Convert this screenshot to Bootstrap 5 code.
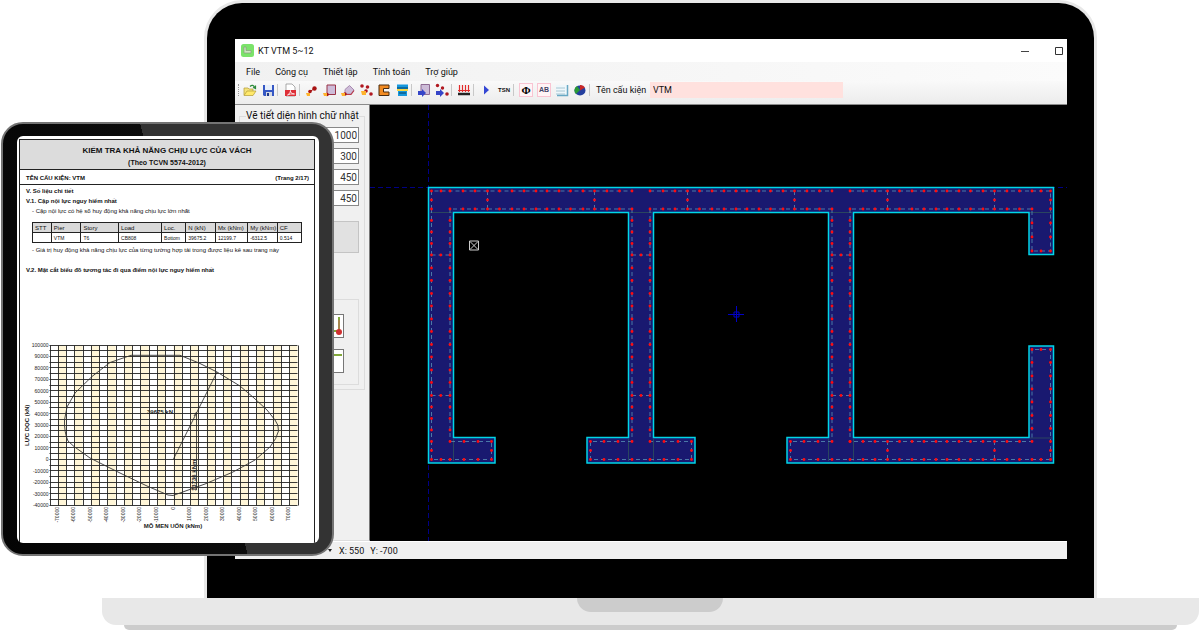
<!DOCTYPE html>
<html lang="vi">
<head>
<meta charset="utf-8">
<meta name="viewport" content="width=device-width, initial-scale=1">
<title>KT VTM</title>
<link href="https://cdn.jsdelivr.net/npm/bootstrap@5.3.0/dist/css/bootstrap.min.css" rel="stylesheet">
<style>
body{background:#fff;color:#222}
.stage{overflow:hidden}
.laptop{margin:0 103px 0 204px;border:3px solid #e8e8e8;border-bottom:0;border-radius:38px 38px 0 0;background:#000;padding:36px 27px 39px 28px}
.laptop-base{margin:0 1px 0 102px;height:27px;background:#e8e8e8;border-radius:0 0 14px 14px}
.notch{width:146px;height:14px;background:#ccc;border-radius:0 0 14px 14px;margin-left:475px}
.laptop-foot{margin:0 23px 0 124px;height:5px;background:#ccc;border-radius:0 0 5px 5px}
.app{background:#f0f0f0;font:9px/14px Roboto,"Noto Sans",sans-serif;color:#111}
.titlebar{height:23px;background:#fff;padding:0 3px 0 6px}
.menubar{height:19px;background:linear-gradient(90deg,#f1f1f1,#fbfbfb);padding-left:11px;gap:15px}
.menubar a{color:#111;text-decoration:none}
.winbtn{width:10px;height:10px;padding:0;border:0;background:none;line-height:0}
.toolbar{height:24px;background:linear-gradient(#f9f9f9,#ececec);padding:0 0 5px 3px;border-bottom:1px solid #8a8a8a}
.grip{width:3px;height:12px;border-left:1px dotted #999}
.tool{width:18px;height:16px;padding:0;border:0;background:none;line-height:0;flex:none;text-align:center}
.tool svg{width:14px;height:14px}
.split{width:4px;height:12px;border-left:1px solid #c8c8c8;flex:none}
.tool-txt{font:bold 6px/14px "Liberation Sans",sans-serif;color:#111}
.tool-box{font:bold 11px/12px "Liberation Serif",serif}
.tool-box span{display:block;width:14px;height:14px;margin:auto;border:1px solid #f9c4d2;background:#fff4f6}
.tool-ab{font:bold 7px/12px "Liberation Sans",sans-serif;color:#446}
.member-label{margin-left:3px;width:52px;white-space:nowrap}
.member{width:193px;height:16px;border:0;padding:0 3px;margin-left:2px;background:#ffe1de;color:#111}
.side{width:135px;flex:none;padding:4px 4px 0 4px;border-right:1px solid #777;border-bottom:1px solid #ddd;font-size:10px}
.group{border:1px solid #dcdcdc;padding:0 5px;height:281px}
.group legend{float:none;width:auto;font-size:10px;line-height:14px;margin:0 0 4px 1px;padding:0;background:#f0f0f0;white-space:nowrap}
.num{display:block;width:100%;height:16px;border:1px solid #888;background:#fff;text-align:right;padding:0 1px;margin-bottom:5px;color:#333}
.wide{display:block;width:100%;height:32px;border:1px solid #c4c4c4;background:#e1e1e1;margin-top:15px}
.sub{border:1px solid #dcdcdc;margin-top:46px;height:86px;padding:14px}
.pick{display:block;width:24px;height:24px;margin:0 0 11px auto;padding:0;border:1px solid #777;background:#fff;line-height:0}
.canvas{flex:1;background:#000;line-height:0;min-width:0}
.canvas svg{width:100%;height:auto;display:block}
.statusbar{height:18px;padding-left:93px;gap:6px;border-top:1px solid #fff}
.tablet{position:absolute;left:1px;top:122px;width:333px;border:2px solid #747474;border-radius:22px;background:linear-gradient(76deg,#040404 0,#0c0c0c 56%,#333 56%);background-origin:border-box;padding:12px 13px 11px 14px}
.page-view{background:#fff;border-radius:6px;padding:3px 4px 0 2px;overflow:hidden}
.sheet{border:1px solid #222;border-bottom:0;font:6px/10px "Liberation Sans",sans-serif;color:#111}
.sheet-head{background:#dcdcdc;border-bottom:1px solid #222;height:30px;padding-top:4px;text-align:center;font-weight:bold;font-size:7px}
.sheet-title{font-size:8px;line-height:14px}
.sheet-row{border-bottom:1px solid #222;height:15px;padding:3px 5px 0 6px;font-weight:bold}
.sheet-body{padding:1px 6px 0 6px}
.sheet-body p,.sheet-body h2{margin:0;font-size:6px;line-height:10px;white-space:nowrap}
.sheet-body h2{font-weight:bold}
.sheet-body h2.next-part{margin-top:10px}
.sheet-body p{padding-left:6px}
.loads{width:270px;table-layout:fixed;margin:6px 0 2px 6px;border-collapse:collapse;line-height:8px;white-space:nowrap}
.loads th,.loads td{border:1px solid #222;padding:0 2px;height:10px;overflow:hidden}
.loads th{background:#d9d9d9;font-weight:normal;font-size:6px}
.loads td{font-size:5px}
.chart{display:block;width:100%;height:auto;margin-top:64px}
</style>
</head>
<body>
<main class="stage position-relative">
  <section class="laptop">
    <div class="app">
      <header class="titlebar d-flex align-items-center">
        <svg width="13" height="13" viewBox="0 0 13 13"><rect width="13" height="13" rx="2.500" fill="#7be36a"/><path d="M3 3v6h7V6.500H5V3z" fill="#cbe8c0" stroke="#8a9a80" stroke-width=".7"/></svg>
        <span class="ms-1">KT VTM 5~12</span>
        <button class="winbtn ms-auto me-4" aria-label="Minimize"><svg width="10" height="10"><path d="M1 5.500h8" stroke="#444"/></svg></button>
        <button class="winbtn" aria-label="Maximize"><svg width="10" height="10"><path d="M1.500 1.500h7v7h-7z" fill="none" stroke="#333"/></svg></button>
      </header>
      <nav class="menubar d-flex align-items-center">
        <a href="#">File</a><a href="#">Công cụ</a><a href="#">Thiết lập</a><a href="#">Tính toán</a><a href="#">Trợ giúp</a>
      </nav>
      <div class="toolbar d-flex align-items-center">
        <i class="grip"></i>
        <button class="tool" aria-label="Open"><svg viewBox="0 0 14 14"><path d="M1 12V5h4l1 1h4v2" fill="#f5e27a" stroke="#b39b33" stroke-width=".7"/><path d="M1 12.500L4 8h9l-3 4.500z" fill="#ffe96b" stroke="#b39b33" stroke-width=".7"/><path d="M7 3.500q3-3 5 1.500M10 4.500l2.500 1V2.500" fill="none" stroke="#2d8a3a" stroke-width="1.200"/></svg></button>
        <button class="tool" aria-label="Save"><svg viewBox="0 0 14 14"><path d="M2 2h11v11H3l-1-1z" fill="#3557c4"/><path d="M4 2h7v5H4z" fill="#e7effb"/><path d="M5 9h6v4H5z" fill="#d5d9e2"/><path d="M6 10h2v3H6z" fill="#223a88"/></svg></button>
        <i class="split"></i>
        <button class="tool" aria-label="PDF"><svg viewBox="0 0 14 14"><path d="M3 1h6l3 3v9H3z" fill="#fff" stroke="#888" stroke-width=".7"/><path d="M2 7h11v6H2z" fill="#de3038"/><path d="M4.500 12q3.500-2 3-4.500-.5 3 4 3.500-4-.5-7 1" fill="none" stroke="#fff" stroke-width=".8"/></svg></button>
        <i class="split"></i>
        <button class="tool" aria-label="Point"><svg viewBox="0 0 14 14"><circle cx="9.500" cy="5.500" r="2.200" fill="#a81414"/><circle cx="5" cy="8.500" r="1.800" fill="#a81414"/><path d="M5 8.500l4.500-3" stroke="#a81414"/><path d="M1 10h4v3H2z" fill="#ffb32c"/></svg></button>
        <button class="tool" aria-label="Rectangle"><svg viewBox="0 0 14 14"><path d="M4 2h8.500v9.500H4z" fill="#cdbcd8" stroke="#9a3247"/><circle cx="4" cy="11.500" r="1.800" fill="#a81414"/><path d="M0 10h4v3H1z" fill="#ffb32c"/></svg></button>
        <button class="tool" aria-label="Polygon"><svg viewBox="0 0 14 14"><path d="M4 10V6.500L8.500 2.500 13 7l-3 4H5z" fill="#cdbcd8" stroke="#a88ab0"/><path d="M4 11.500h6L13 7.500" fill="none" stroke="#b8394a" stroke-width="1.200"/><circle cx="4" cy="11" r="1.700" fill="#a81414"/><path d="M0 10h4v3H1z" fill="#ffb32c"/></svg></button>
        <button class="tool" aria-label="Points"><svg viewBox="0 0 14 14" fill="#b01820"><circle cx="3" cy="3" r="1.800"/><circle cx="8.500" cy="4" r="1.800"/><circle cx="7" cy="8" r="1.800"/><circle cx="12" cy="11" r="1.800"/><path d="M2 8h5v4H3z" fill="#ffb32c"/></svg></button>
        <button class="tool" aria-label="C section"><svg viewBox="0 0 14 14"><path d="M2 2h10v3.500H6.500V9H12v3.500H2z" fill="#f28b22" stroke="#4a2c10"/></svg></button>
        <button class="tool" aria-label="Section"><svg viewBox="0 0 14 14"><path d="M2 1.500h11v4.500H2z" fill="#1798dd"/><path d="M2 6h11v2H2z" fill="#f7d844"/><path d="M3 8h9v5H3z" fill="#1798dd"/><path d="M2 5h11M4 10h7" stroke="#083e63"/></svg></button>
        <i class="split"></i>
        <button class="tool" aria-label="Move shape"><svg viewBox="0 0 14 14"><path d="M4 1.500h8.500v10H4z" fill="#cdbcd8" stroke="#8e6b94"/><path d="M1 8h4V6l4 4-4 4v-2H1z" fill="#3545c8"/></svg></button>
        <button class="tool" aria-label="Move points"><svg viewBox="0 0 14 14" fill="#b01820"><circle cx="2.500" cy="2.500" r="1.700"/><circle cx="7.500" cy="5" r="1.700"/><circle cx="12" cy="11" r="1.800"/><path d="M1 8h4V6l4 4-4 4v-2H1z" fill="#3545c8"/></svg></button>
        <i class="split"></i>
        <button class="tool" aria-label="Load"><svg viewBox="0 0 14 14"><path d="M1 11h12" stroke="#222" stroke-width="2.500"/><path d="M2.500 9V2m3 7V2m3 7V2m3 7V2M1 7.500h12" stroke="#e22b2b" stroke-width="1.200"/></svg></button>
        <i class="split"></i>
        <button class="tool" aria-label="Run"><svg viewBox="0 0 14 14"><path d="M5 2.500l5 4.500-5 4.500z" fill="#3447d4"/></svg></button>
        <button class="tool tool-txt">TSN</button>
        <i class="split"></i>
        <button class="tool tool-box"><span>Φ</span></button>
        <button class="tool tool-box"><span class="tool-ab">AB</span></button>
        <button class="tool" aria-label="Table"><svg viewBox="0 0 14 14"><path d="M1 2h12v11H1z" fill="#eef7fb"/><path d="M1 5h9M1 8h9M1 11h9" stroke="#a8c6d2"/><path d="M12.500 2v10.500H2" fill="none" stroke="#68a8c4" stroke-width="1.500"/></svg></button>
        <button class="tool" aria-label="Chart"><svg viewBox="0 0 14 14"><ellipse cx="7" cy="7.500" rx="5.500" ry="5" fill="#243f9e"/><path d="M7 7L4 3a5 5 0 00-1 8z" fill="#2a9a36"/><path d="M7 7.500l5-3a5 5 0 00-5-2.500z" fill="#c92828"/></svg></button>
        <i class="split"></i>
        <label for="member" class="member-label">Tên cấu kiện</label>
        <input id="member" class="member" value="VTM">
      </div>
      <div class="d-flex">
        <aside class="side">
          <fieldset class="group">
            <legend>Vẽ tiết diện hình chữ nhật</legend>
            <input class="num" aria-label="B" value="1000">
            <input class="num" aria-label="H" value="300">
            <input class="num" aria-label="X" value="450">
            <input class="num" aria-label="Y" value="450">
            <button class="wide" aria-label="Vẽ"></button>
            <div class="sub">
              <button class="pick" aria-label="Corner"><svg width="22" height="22"><path d="M18 2v14H8" fill="none" stroke="#82a83b" stroke-width="2"/><path d="M18 5v11" stroke="#c66"/><circle cx="18" cy="17" r="3" fill="#cf3030"/></svg></button>
              <button class="pick" aria-label="Edge"><svg width="22" height="22"><path d="M5 5h16" stroke="#82a83b" stroke-width="2"/></svg></button>
            </div>
          </fieldset>
        </aside>
        <div class="canvas">
          <svg viewBox="370 105 697 436">
            <path d="M428.500 105V541M370 187.500H1067" stroke="#000085" stroke-dasharray="5 3"/>
            <path d="M428.500 187.500H1053.500V254.500H1029V212.500H853.500V437.500H1029V346H1053.500V463H787V437.500H828.500V212.500H653.500V437.500H695V463H587V437.500H628.500V212.500H453.500V437.500H495V463H428.500z" fill="#191970" stroke="#00d5e8" stroke-width="1.500"/>
            <path d="M430 212.500h22M630 212.500h22M830 212.500h22M1030 212.500h22M453.500 439v22M628.500 439v22M653.500 439v22M828.500 439v22M853.500 439v22M1030 438h22" stroke="#2a4560"/>
            <g id="ties" fill="none" stroke="#4a78a8" stroke-dasharray="4 3"></g>
            <g id="bars" fill="#ff0a10"></g>
            <path d="M728 314.500h16M736.500 306v16M734 312h5v5h-5z" fill="none" stroke="#0000c8"/>
            <path d="M469.500 241h9v9h-9zM470 241.500l8 8m0-8l-8 8" fill="none" stroke="#ccc"/>
          </svg>
        </div>
      </div>
      <footer class="statusbar d-flex align-items-center"><svg width="5" height="4"><path d="M0 0h4l-2 3z" fill="#222"/></svg><span>X: 550</span><span>Y: -700</span></footer>
    </div>
  </section>
  <div class="laptop-base"><div class="notch"></div></div>
  <div class="laptop-foot"></div>

  <section class="tablet">
    <div class="page-view">
      <article class="sheet">
        <header class="sheet-head"><div class="sheet-title">KIỂM TRA KHẢ NĂNG CHỊU LỰC CỦA VÁCH</div><div>(Theo TCVN 5574-2012)</div></header>
        <div class="sheet-row d-flex justify-content-between"><span>TÊN CẤU KIỆN: VTM</span><span>(Trang 2/17)</span></div>
        <div class="sheet-body">
          <h2>V. Số liệu chi tiết</h2>
          <h2>V.1. Cặp nội lực nguy hiểm nhất</h2>
          <p>- Cặp nội lực có hệ số huy động khả năng chịu lực lớn nhất</p>
          <table class="loads">
            <colgroup><col style="width:7%"><col style="width:11%"><col style="width:14%"><col style="width:16%"><col style="width:9%"><col style="width:11%"><col style="width:12%"><col style="width:11%"><col style="width:9%"></colgroup>
            <thead><tr><th>STT</th><th>Pier</th><th>Story</th><th>Load</th><th>Loc.</th><th>N (kN)</th><th>Mx (kNm)</th><th>My (kNm)</th><th>CF</th></tr></thead>
            <tbody><tr><td></td><td>VTM</td><td>T6</td><td>CB808</td><td>Bottom</td><td>39675.2</td><td>12199.7</td><td>-6312.5</td><td>0.514</td></tr></tbody>
          </table>
          <p>- Giá trị huy động khả năng chịu lực của từng tường hợp tải trong được liệu kê sau trang này</p>
          <h2 class="next-part">V.2. Mặt cắt biểu đồ tương tác đi qua điểm nội lực nguy hiểm nhất</h2>
        </div>
        <svg class="chart" viewBox="20 339 294 204" font-family="Liberation Sans, sans-serif" font-size="5" fill="#222">
          <g id="plot"></g>
          <path d="M131 355.300H180L199 363 217 372 240 386 254 398 267 410 275 420Q279 425 278.500 431 277 438 270 447L255 460 233 472 205 484 173 495.500 168 495 147 486 120 473 90 458 74 446.500 68 441Q64 432 64.500 420L67 407 75 393 92 376.500 110 362.500z" fill="none" stroke="#333" stroke-width=".9"/>
          <path d="M173.500 459L217 372M196.500 413V490M194 416l2.500-4" fill="none" stroke="#222" stroke-width=".8"/>
          <text x="147" y="414" font-weight="bold" font-size="6">39675 kN</text>
          <text transform="translate(196 491) rotate(-90)" font-weight="bold" font-size="6">13736 kNm</text>
          <text transform="translate(29 446) rotate(-90)" font-weight="bold" font-size="6">LỰC DỌC (kN)</text>
          <text x="173" y="528" text-anchor="middle" font-weight="bold" font-size="6">MÔ MEN UỐN (kNm)</text>
        </svg>
      </article>
    </div>
  </section>
</main>
<script>
// Reinforcement: bar positions along each wall segment
const bay=[0,13,25,37.5,49.5,62,74,86,97,109,120.5,133,144.5,157,169.5,182];
const bars=[], ties=[];
const add=(xs,ys)=>xs.forEach(x=>ys.forEach(y=>bars.push([x,y])));
[450,650,850].forEach(b=>{
  add(bay.map(v=>b+v),[191,209]);
  add([b+37.5,b+144.5],[200]);
  ties.push(`M${b+37.5} 191v18M${b+144.5} 191v18`);
});
add([431.5,1050.5],[191,200,209]); add([441,1041],[191]);
const col=[220.5,232,243.5,255,268,280.5,293.5,306,319,331.5,344.5,357,370,382.5,395.5,407,418.5,430,441.5];
[[431.5,450],[632,650],[832,850]].forEach(c=>{
  add(c,col); add([(c[0]+c[1])/2],[255,395.5]);
  ties.push(`M${c[0]} 209V441M${c[1]} 209V441M${c[0]} 255H${c[1]}M${c[0]} 395.5H${c[1]}`);
});
add([431.5,441,450,464,478,491.5,590.5,604,618,632,650,664,678,691.5,790.5,804,818,832,1041,1050.5],[459.5]);
add([464,478,491.5,590.5,604,618,664,678,691.5,790.5,804,818,1050.5],[441.5]);
add([431.5,491.5,590.5,691.5,790.5,887.5,994.5,1050.5],[450.5]);
add(bay.map(v=>850+v),[441.5,459.5]);
add([1032,1050.5],[223,237,251,349.5,362.5,376,389,402,415.5,428.5]); add([1041],[251,349.5]);
ties.push('M431.500 209V191H632M650 191H832M850 191H1050.500V251H1032V209H850M832 209H650M632 209H450M431.500 441V459.500H491.500V441.500H450M632 441.500H590.500V459.500H691.500V441.500H650M832 441.500H790.500V459.500H1050.500V349.500H1032V441.500H850M887.500 441v18M994.500 441v18');
document.getElementById('ties').innerHTML=`<path d="${ties.join('')}"/>`;
document.getElementById('bars').innerHTML=bars.map(([x,y])=>`<circle cx="${x}" cy="${y}" r="1.4"/>`).join('');

// Interaction diagram grid and axis labels
const X0=49.5,Y0=345.5,W=248,H=160,cw=W/30,rh=H/28;
let g=`<rect x="${X0}" y="${Y0}" width="${W}" height="${H}" fill="#fff"/>`;
for(let i=1;i<30;i+=2) g+=`<rect x="${X0+i*cw}" y="${Y0}" width="${cw}" height="${H}" fill="#fff6d8"/>`;
let d='';
for(let i=0;i<=30;i++) d+=`M${Math.round(X0+i*cw)+.5} ${Y0}v${H}`;
for(let i=0;i<=28;i++) d+=`M${X0} ${Math.round(Y0+i*rh)-.5}h${W}`;
g+=`<path d="${d}" stroke="#222" stroke-width=".9"/>`;
for(let i=0;i<15;i++){
  g+=`<text x="48.5" y="${Y0+i*rh*2+1.5}" text-anchor="end">${100000-i*10000}</text>`;
  g+=`<text transform="translate(${X0+(1+2*i)*cw+1} 507) rotate(-90)" text-anchor="end">${(i-7)*10000}</text>`;
}
document.getElementById('plot').innerHTML=g;
</script>
<script src="https://cdn.jsdelivr.net/npm/bootstrap@5.3.0/dist/js/bootstrap.bundle.min.js"></script>
</body>
</html>
